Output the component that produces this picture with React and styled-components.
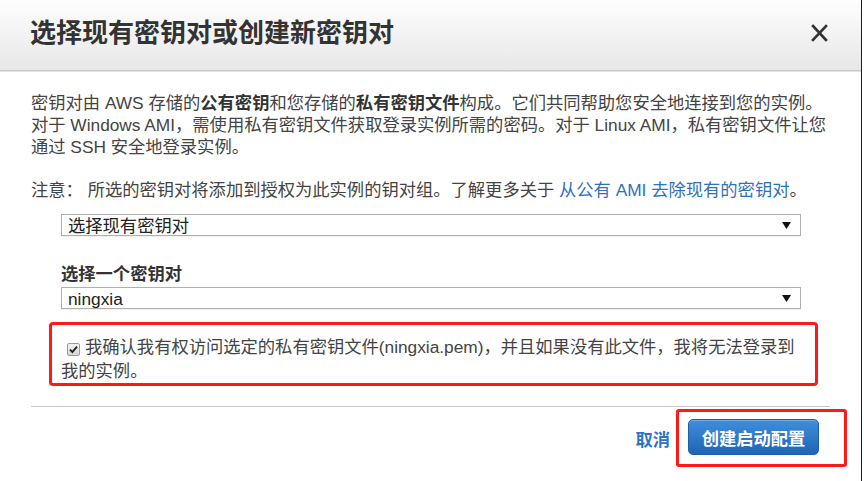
import React from "react";
import styled, { createGlobalStyle } from "styled-components";

const GlobalStyle = createGlobalStyle`
  body {
    margin: 0;
    background: #fff;
    font-family: "Liberation Sans", "Noto Sans CJK SC", sans-serif;
  }
`;

const App = () => {
  return (
    <>
      <GlobalStyle />
      <Dialog>
        <Header>
          <Title>选择现有密钥对或创建新密钥对</Title>
          <Close aria-label="close">
            <svg width="17" height="18" viewBox="0 0 17 18">
              <path d="M2 2 L15 16 M15 2 L2 16" stroke="#333" strokeWidth="2.6" strokeLinecap="square" />
            </svg>
          </Close>
        </Header>
        <Body>
          <Text>
            密钥对由 AWS 存储的<b>公有密钥</b>和您存储的<b>私有密钥文件</b>构成。它们共同帮助您安全地连接到您的实例。
            <br />
            对于 Windows AMI，需使用私有密钥文件获取登录实例所需的密码。对于 Linux AMI，私有密钥文件让您
            <br />
            通过 SSH 安全地登录实例。
          </Text>
          <Note>
            注意： 所选的密钥对将添加到授权为此实例的钥对组。了解更多关于 <Link>从公有 AMI 去除现有的密钥对</Link>。
          </Note>
          <Form>
            <Select>
              <span>选择现有密钥对</span>
              <Arrow />
            </Select>
            <Label>选择一个密钥对</Label>
            <Select>
              <span>ningxia</span>
              <Arrow />
            </Select>
          </Form>
          <Confirm>
            <Check>
              <svg width="9" height="9" viewBox="0 0 9 9">
                <path d="M1 4.6 L3.4 7 L8 1.6" stroke="#222" strokeWidth="1.9" fill="none" />
              </svg>
            </Check>
            我确认我有权访问选定的私有密钥文件(ningxia.pem)，并且如果没有此文件，我将无法登录到
            <br />
            我的实例。
          </Confirm>
          <Divider />
          <Footer>
            <Cancel>取消</Cancel>
            <Highlight>
              <Primary>创建启动配置</Primary>
            </Highlight>
          </Footer>
        </Body>
      </Dialog>
    </>
  );
};

const Arrow = () => (
  <svg width="9" height="7" viewBox="0 0 9 7">
    <path d="M0 0 H9 L4.5 7 Z" fill="#111" />
  </svg>
);

const Dialog = styled.div`
  width: 862px;
  height: 481px;
  box-sizing: border-box;
  border-right: 1px solid #1a1a1a;
  background: #fff;
  overflow: hidden;
`;

const Header = styled.header`
  height: 70px;
  border-bottom: 1px solid #c9c9c9;
  background: linear-gradient(#fefefe, #e7e7e7);
  display: flex;
  align-items: center;
  justify-content: space-between;
  padding: 0 33px 0 30px;
  box-shadow: 0 1px 0 #e2e2e2;
`;

const Title = styled.h1`
  margin: 0 0 4px;
  font-size: 26px;
  line-height: 1;
  font-weight: bold;
  color: #333;
`;

const Close = styled.button`
  border: 0;
  background: none;
  padding: 0;
  margin-bottom: 4px;
  display: flex;
  cursor: pointer;
`;

const Body = styled.div`
  padding: 21px 31px 0;
`;

const Text = styled.p`
  margin: 0;
  font-size: 17.3px;
  line-height: 22px;
  color: #444;
  white-space: nowrap;

  b {
    color: #333;
  }
`;

const Note = styled(Text)`
  margin-top: 21px;
`;

const Link = styled.a`
  color: #2e72bb;
  cursor: pointer;
`;

const Form = styled.div`
  margin-left: 30px;
  width: 740px;
  padding-top: 13px;
`;

const Select = styled.div`
  height: 22px;
  box-sizing: border-box;
  border: 1px solid #b0b0b0;
  box-shadow: 0 1px 0 #f0f0f0;
  display: flex;
  align-items: center;
  justify-content: space-between;
  padding: 1px 9px 0 6px;
  font-size: 17.3px;
  line-height: 20px;
  color: #222;
`;

const Label = styled.div`
  margin: 27px 0 2px;
  font-size: 17.3px;
  line-height: 22px;
  font-weight: bold;
  color: #333;
`;

const Confirm = styled.div`
  margin: 13px 0 0 18px;
  width: 769px;
  height: 64px;
  box-sizing: border-box;
  border: 3px solid #ff1a1a;
  border-radius: 4px;
  padding: 10px 0 0 9px;
  font-size: 17.3px;
  line-height: 24px;
  color: #444;
  white-space: nowrap;
`;

const Check = styled.span`
  display: inline-flex;
  align-items: center;
  justify-content: center;
  width: 13px;
  height: 13px;
  box-sizing: border-box;
  margin: 0 5px 0 6px;
  border: 1px solid #9c9c9c;
  border-radius: 2px;
  background: linear-gradient(#f2f2f2, #d8d8d8);
  vertical-align: -1px;
`;

const Divider = styled.hr`
  margin: 20px 0 0;
  border: 0;
  border-top: 1px solid #c6c6c6;
`;

const Footer = styled.div`
  display: flex;
  justify-content: flex-end;
  align-items: center;
  padding-top: 2px;
  margin-right: -17px;
`;

const Cancel = styled.a`
  font-size: 17.3px;
  font-weight: bold;
  color: #2f74c2;
  margin-right: 6px;
  cursor: pointer;
`;

const Highlight = styled.div`
  border: 3px solid #ff1a1a;
  border-radius: 3px;
  padding: 7px 25px 9px 9px;
  display: flex;
`;

const Primary = styled.button`
  width: 131px;
  height: 36px;
  border: 1px solid #1d5ea8;
  border-radius: 5px;
  background: linear-gradient(#3f8edb, #1f64b6);
  color: #fff;
  font-family: inherit;
  font-size: 17.3px;
  font-weight: bold;
  padding: 0;
  cursor: pointer;
  box-shadow: inset 0 1px 0 rgba(255, 255, 255, 0.25);
`;

export default App;
